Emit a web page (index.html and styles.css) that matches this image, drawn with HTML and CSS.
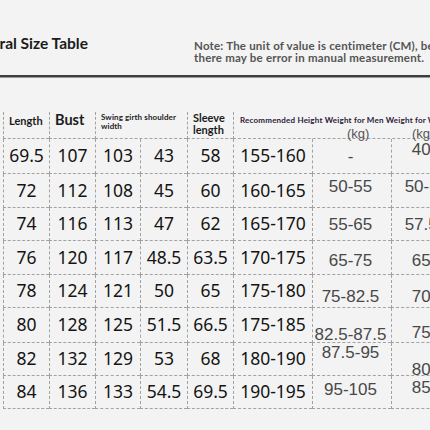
FILE: index.html
```html
<!DOCTYPE html>
<html lang="en">
<head>
<meta charset="utf-8">
<title>General Size Table</title>
<link rel="stylesheet" href="styles.css">
</head>
<body>
<div class="page">
  <header class="top">
    <div class="title-box"><h1 class="title">General Size Table</h1></div>
    <p class="note">Note: The unit of value is centimeter (CM), because<br>there may be error in manual measurement.</p>
  </header>
  <div class="rule"></div>

  <div class="table">
    <div class="hc h-length">Length</div>
    <div class="hc h-bust">Bust</div>
    <div class="hc h-swing span2">Swing girth shoulder<br>width</div>
    <div class="hc h-sleeve">Sleeve<br>length</div>
    <div class="hc h-rec span3">Recommended Height Weight for Men Weight for Women</div>
    <div class="kg kg-m">(kg)</div>
    <div class="kg kg-w">(kg)</div>

    <div class="c">69.5</div><div class="c">107</div><div class="c">103</div><div class="c">43</div><div class="c">58</div><div class="c">155-160</div><div class="c w m">-</div><div class="c w f d-7">40-50</div>
    <div class="c">72</div><div class="c">112</div><div class="c">108</div><div class="c">45</div><div class="c">60</div><div class="c">160-165</div><div class="c w m d-4">50-55</div><div class="c w f d-4">50-57.5</div>
    <div class="c">74</div><div class="c">116</div><div class="c">113</div><div class="c">47</div><div class="c">62</div><div class="c">165-170</div><div class="c w m">55-65</div><div class="c w f">57.5-65</div>
    <div class="c">76</div><div class="c">120</div><div class="c">117</div><div class="c">48.5</div><div class="c">63.5</div><div class="c">170-175</div><div class="c w m d3">65-75</div><div class="c w f d3">65-70</div>
    <div class="c">78</div><div class="c">124</div><div class="c">121</div><div class="c">50</div><div class="c">65</div><div class="c">175-180</div><div class="c w m d5">75-82.5</div><div class="c w f d5">70-75</div>
    <div class="c">80</div><div class="c">128</div><div class="c">125</div><div class="c">51.5</div><div class="c">66.5</div><div class="c">175-185</div><div class="c w m d9">82.5-87.5</div><div class="c w f d7">75-80</div>
    <div class="c">82</div><div class="c">132</div><div class="c">129</div><div class="c">53</div><div class="c">68</div><div class="c">180-190</div><div class="c w m d-7">87.5-95</div><div class="c w f d10">80-85</div>
    <div class="c">84</div><div class="c">136</div><div class="c">133</div><div class="c">54.5</div><div class="c">69.5</div><div class="c">190-195</div><div class="c w m d-3">95-105</div><div class="c w f d-5">85-95</div>
  </div>
</div>
</body>
</html>
```

FILE: styles.css
```css
html, body {
  margin: 0;
  padding: 0;
}
body {
  background: #f3f3f3;
  width: 430px;
  height: 430px;
  overflow: hidden;
}
.page {
  width: 430px;
  height: 430px;
  overflow: hidden;
}

/* ---------- top heading ---------- */
.top {
  display: flex;
  align-items: flex-start;
  height: 75px;
  box-sizing: border-box;
  padding-top: 36px;
}
.title-box {
  width: 194px;
  flex: none;
}
.title {
  margin: 0 0 0 -37px;
  font-family: "Lato", "Noto Sans", sans-serif;
  font-weight: 700;
  font-size: 15.5px;
  line-height: 1;
  color: #1b1b1b;
  white-space: nowrap;
}
.note {
  flex: none;
  margin: 4px 0 0 0;
  font-family: "Lato", "Noto Sans", sans-serif;
  font-weight: 700;
  font-size: 11.5px;
  letter-spacing: 0.2px;
  line-height: 12px;
  color: #555;
  white-space: nowrap;
}
.rule {
  height: 2px;
  background: #3d3d3d;
  border-bottom: 1px solid #9a9a9a;
}

/* ---------- table ---------- */
.table {
  display: grid;
  grid-template-columns: 46px 46px 45px 47px 46px 79px 79px 84px;
  grid-template-rows: 27px 35px 34px 33px 34px 33px 35px 33px 33px;
  margin: 34px 0 0 3px;
  width: max-content;
}
.hc, .c {
  border-left: 1px dashed #a2a2a2;
  border-bottom: 1px dashed #a2a2a2;
  box-sizing: border-box;
}
.hc {
  grid-row: 1;
  font-family: "Lato", "Noto Sans", sans-serif;
  font-weight: 700;
  color: #1b1b1b;
  padding-left: 5px;
  white-space: nowrap;
}
.span2 { grid-column: span 2; }
.span3 { grid-column: 6 / 9; }
.h-length {
  font-size: 11px;
  line-height: 1;
  padding-top: 3px;
}
.h-bust {
  font-size: 14.5px;
  line-height: 1;
  padding-top: 1px;
}
.h-swing {
  font-size: 8px;
  letter-spacing: 0.1px;
  line-height: 9px;
  padding-top: 1px;
  color: #222;
}
.h-sleeve {
  font-size: 11px;
  line-height: 11.5px;
  padding-top: 0;
}
.h-rec {
  font-size: 8px;
  letter-spacing: 0.2px;
  line-height: 9px;
  padding-top: 4px;
  padding-left: 6px;
  color: #2b2038;
  overflow: hidden;
}
.kg {
  grid-row: 1;
  align-self: end;
  font-family: "Liberation Sans", Arial, sans-serif;
  font-size: 13px;
  line-height: 1;
  color: #555;
  margin-bottom: -1px;
}
.kg-m { grid-column: 7; padding-left: 35px; }
.kg-w { grid-column: 8; padding-left: 21px; }

.c {
  display: flex;
  align-items: center;
  justify-content: center;
  font-family: "Noto Sans", "Open Sans", sans-serif;
  font-size: 17.5px;
  line-height: 1;
  color: #141414;
  white-space: nowrap;
}
.c.w {
  font-family: "Liberation Sans", Arial, sans-serif;
  font-size: 17px;
  color: #484848;
}
.c.m { padding-right: 3px; }

/* hand-measured vertical drift of the weight figures */
.d-7 { padding-bottom: 14px; }
.d-5 { padding-bottom: 10px; }
.d-4 { padding-bottom: 8px; }
.d-3 { padding-bottom: 6px; }
.d3 { padding-top: 6px; }
.d5 { padding-top: 10px; }
.d7 { padding-top: 14px; }
.d9 { padding-top: 18px; }
.d10 { padding-top: 20px; }
```
